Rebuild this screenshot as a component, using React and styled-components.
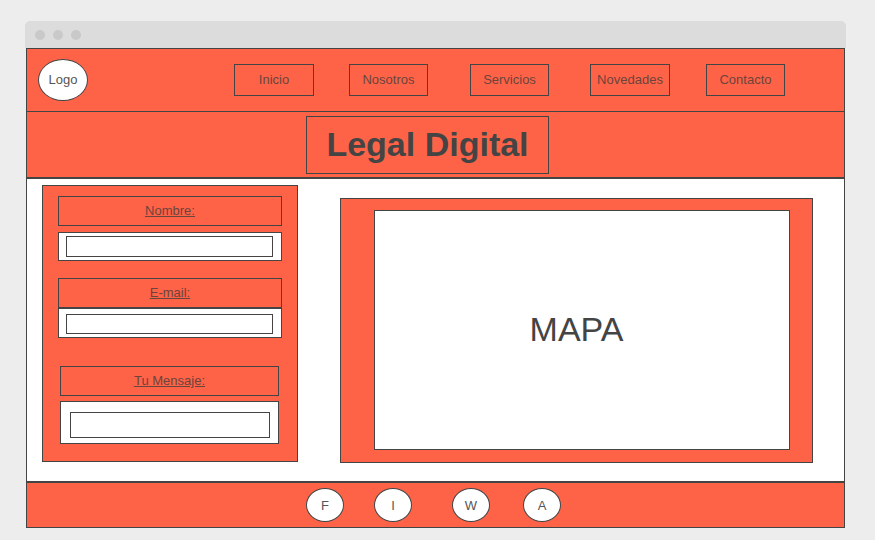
import React from "react";
import styled, { createGlobalStyle } from "styled-components";

const ink = "#444444";
const tomato = "#ff6347";
const mutedOnTomato = "#6b443c";
const mutedOnWhite = "#555555";

const GlobalStyle = createGlobalStyle`
  *, *::before, *::after { box-sizing: border-box; }
  body {
    margin: 0;
    background: #ededed;
    color: ${ink};
    font: 13px/16px "Liberation Sans", Arial, sans-serif;
  }
`;

const Browser = styled.div`
  padding: 21px 29px 12px 25px;
`;

const TitleBar = styled.div`
  display: flex;
  align-items: center;
  gap: 8px;
  height: 27px;
  padding: 0 10px;
  background: #dcdcdc;
  border-radius: 5px 5px 0 0;
`;

const Dot = styled.span`
  width: 10px;
  height: 10px;
  border-radius: 50%;
  background: #c9c9c9;
`;

const Page = styled.div`
  margin: 0 1px;
  border: 1px solid ${ink};
  background: #ffffff;
`;

const Header = styled.header`
  display: flex;
  align-items: center;
  padding: 10px 59px 10px 11px;
  background: ${tomato};
  border-bottom: 1px solid ${ink};
`;

const Round = styled.a`
  display: flex;
  flex: none;
  align-items: center;
  justify-content: center;
  border: 1px solid ${ink};
  border-radius: 50%;
  background: #ffffff;
  color: ${mutedOnWhite};
  text-decoration: none;
`;

const Logo = styled(Round)`
  width: 50px;
  height: 42px;
`;

const Nav = styled.nav`
  display: grid;
  flex: 1;
  grid-template-columns: 80fr 35fr 79fr 42fr 79fr 41fr 80fr 36fr 79fr;
  margin-left: 146px;
`;

const NavLink = styled.a`
  grid-column: ${(p) => p.$column};
  padding: 7px 0;
  border: 1px solid ${ink};
  color: ${mutedOnTomato};
  text-align: center;
  text-decoration: none;
`;

const Banner = styled.div`
  display: flex;
  justify-content: center;
  padding: 4px 16px 3px 0;
  background: ${tomato};
  border-bottom: 2px solid ${ink};
`;

const Heading = styled.h1`
  margin: 0;
  padding: 7px 19px 9px;
  border: 1px solid ${ink};
  font-size: 34px;
  line-height: 40px;
`;

const Main = styled.main`
  display: grid;
  grid-template-columns: 256fr 473fr;
  gap: 42px;
  padding: 6px 31px 18px 15px;
`;

const ContactForm = styled.form`
  display: flex;
  flex-direction: column;
  margin-bottom: 1px;
  padding: 10px 15px 17px;
  border: 1px solid ${ink};
  background: ${tomato};
`;

const Field = styled.div`
  margin: ${(p) => p.$margin || "0"};
`;

const Label = styled.label`
  display: block;
  padding: 6px 0;
  border: 1px solid ${ink};
  color: ${mutedOnTomato};
  text-align: center;
  text-decoration: underline;
`;

const InputFrame = styled.div`
  display: flex;
  margin-top: ${(p) => p.$gap}px;
  padding: ${(p) => p.$padding};
  border: 1px solid ${ink};
  background: #ffffff;
`;

const TextInput = styled.input`
  flex: 1;
  min-width: 0;
  height: ${(p) => p.$height}px;
  margin: 0;
  padding: 0 4px;
  border: 1px solid ${ink};
  border-radius: 0;
  background: #ffffff;
  color: inherit;
  font: inherit;
  resize: none;
`;

const MapPanel = styled.section`
  display: flex;
  margin-top: 13px;
  padding: 11px 22px 12px 33px;
  border: 1px solid ${ink};
  background: ${tomato};
`;

const MapArea = styled.div`
  display: flex;
  flex: 1;
  align-items: center;
  justify-content: center;
  padding: 0 11px 2px 0;
  border: 1px solid ${ink};
  background: #ffffff;
  font-size: 34px;
  line-height: 40px;
`;

const Footer = styled.footer`
  display: grid;
  grid-template-columns: 38px 30px 38px 40px 38px 33px 38px;
  justify-content: center;
  padding: 5px 4px 5px 0;
  background: ${tomato};
  border-top: 2px solid ${ink};
`;

const SocialLink = styled(Round)`
  grid-column: ${(p) => p.$column};
  height: 34px;
  padding-top: 1px;
`;

const links = ["Inicio", "Nosotros", "Servicios", "Novedades", "Contacto"];
const socials = ["F", "I", "W", "A"];

export default function App() {
  return (
    <>
      <GlobalStyle />
      <Browser>
        <TitleBar>
          <Dot />
          <Dot />
          <Dot />
        </TitleBar>
        <Page>
          <Header>
            <Logo href="#">Logo</Logo>
            <Nav>
              {links.map((name, i) => (
                <NavLink key={name} href="#" $column={i * 2 + 1}>
                  {name}
                </NavLink>
              ))}
            </Nav>
          </Header>
          <Banner>
            <Heading>Legal Digital</Heading>
          </Banner>
          <Main>
            <ContactForm>
              <Field>
                <Label htmlFor="nombre">Nombre:</Label>
                <InputFrame $gap={6} $padding="3px 8px 3px 7px">
                  <TextInput id="nombre" type="text" $height={21} />
                </InputFrame>
              </Field>
              <Field $margin="17px 0 28px">
                <Label htmlFor="email">E-mail:</Label>
                <InputFrame $gap={0} $padding="5px 8px 3px 7px">
                  <TextInput id="email" type="email" $height={20} />
                </InputFrame>
              </Field>
              <Field $margin="0 3px 0 2px">
                <Label htmlFor="mensaje">Tu Mensaje:</Label>
                <InputFrame $gap={5} $padding="10px 8px 5px 9px">
                  <TextInput as="textarea" id="mensaje" rows={1} $height={26} />
                </InputFrame>
              </Field>
            </ContactForm>
            <MapPanel>
              <MapArea>MAPA</MapArea>
            </MapPanel>
          </Main>
          <Footer>
            {socials.map((letter, i) => (
              <SocialLink key={letter} href="#" $column={i * 2 + 1}>
                {letter}
              </SocialLink>
            ))}
          </Footer>
        </Page>
      </Browser>
    </>
  );
}
